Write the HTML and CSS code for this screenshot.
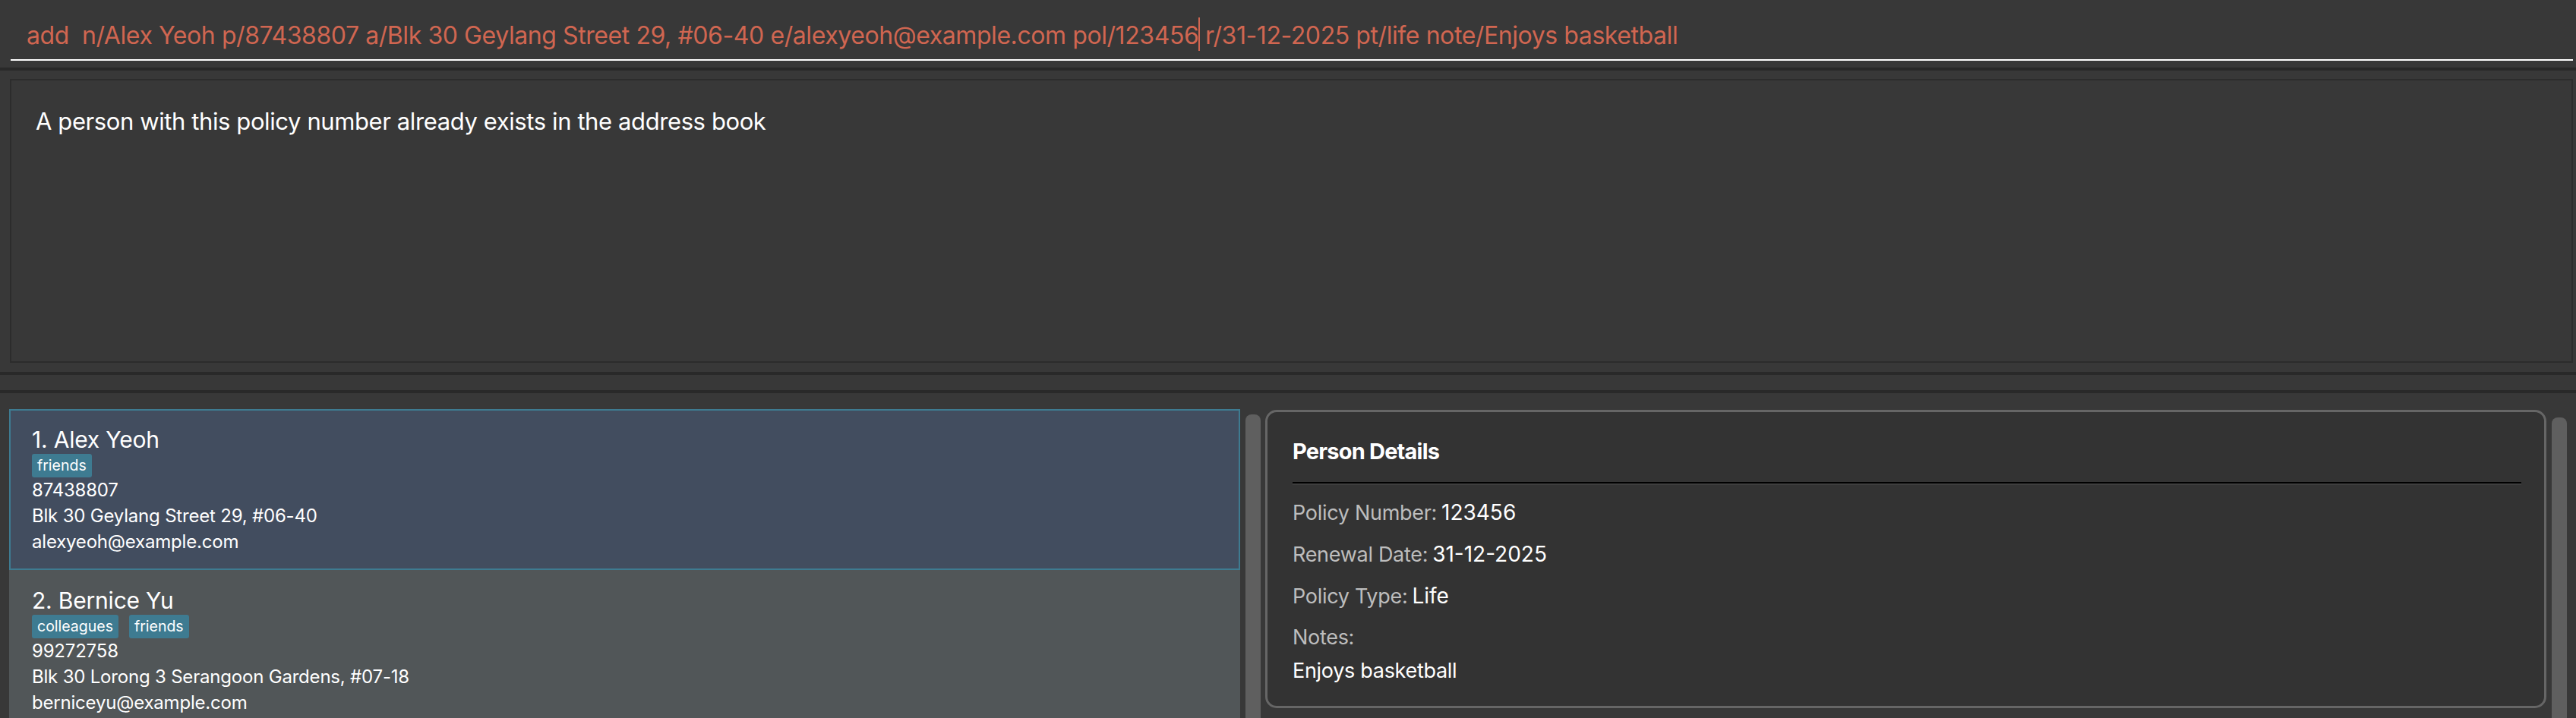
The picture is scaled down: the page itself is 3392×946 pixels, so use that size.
FILE: index.html
```html
<!DOCTYPE html>
<html lang="en">
<head>
<meta charset="utf-8">
<title>Address Book</title>
<link rel="stylesheet" href="styles.css">
</head>
<body>
<div class="app">
  <div class="command-box">
    <div class="command-field"><span class="error-text">add&nbsp; n/Alex Yeoh p/87438807 a/Blk 30 Geylang Street 29, #06-40 e/alexyeoh@example.com pol/123456<span class="caret"></span> r/31-12-2025 pt/life note/Enjoys basketball</span></div>
  </div>
  <div class="divider"></div>
  <div class="result-pane">
    <div class="result-box">A person with this policy number already exists in the address book</div>
  </div>
  <div class="divider"></div>
  <div class="status-pane"></div>
  <div class="divider"></div>
  <div class="main">
    <div class="person-list">
      <div class="card card-selected">
        <div class="card-name">1. Alex Yeoh</div>
        <div class="tags"><span class="tag">friends</span></div>
        <div class="card-line">87438807</div>
        <div class="card-line">Blk 30 Geylang Street 29, #06-40</div>
        <div class="card-line">alexyeoh@example.com</div>
      </div>
      <div class="card card-odd">
        <div class="card-name">2. Bernice Yu</div>
        <div class="tags"><span class="tag">colleagues</span><span class="tag">friends</span></div>
        <div class="card-line">99272758</div>
        <div class="card-line">Blk 30 Lorong 3 Serangoon Gardens, #07-18</div>
        <div class="card-line">berniceyu@example.com</div>
      </div>
    </div>
    <div class="scrollbar scrollbar-list"></div>
    <div class="details">
      <div class="details-title">Person Details</div>
      <div class="separator"></div>
      <div class="detail-row"><span class="detail-label">Policy Number:</span><span class="detail-value">123456</span></div>
      <div class="detail-row"><span class="detail-label">Renewal Date:</span><span class="detail-value">31-12-2025</span></div>
      <div class="detail-row"><span class="detail-label">Policy Type:</span><span class="detail-value">Life</span></div>
      <div class="detail-row detail-notes"><span class="detail-label">Notes:</span></div>
      <div class="detail-note-value">Enjoys basketball</div>
    </div>
    <div class="scrollbar scrollbar-details"></div>
  </div>
</div>
</body>
</html>
```
FILE: styles.css
```css
html, body {
  margin: 0;
  padding: 0;
  background: #383838;
}

body {
  width: 3392px;
  height: 946px;
  overflow: hidden;
  font-family: Inter, "Open Sans", "Liberation Sans", sans-serif;
  color: #ffffff;
}

.app {
  display: flex;
  flex-direction: column;
  height: 946px;
}

/* command box */
.command-box {
  height: 89px;
  padding: 0 4px 0 14px;
  box-sizing: border-box;
}

.command-field {
  height: 80px;
  box-sizing: border-box;
  padding: 23px 0 15px 21px;
  border-bottom: 2px solid #ffffff;
  font-size: 32px;
  line-height: 40px;
  letter-spacing: -0.42px;
  white-space: nowrap;
}

.error-text {
  color: #d06651;
}

.caret {
  display: inline-block;
  width: 2px;
  height: 44px;
  margin-right: -2px;
  background: #d06651;
  vertical-align: -9px;
}

.divider {
  height: 4px;
  background: #292929;
  flex-shrink: 0;
}

/* result display */
.result-pane {
  height: 397px;
  box-sizing: border-box;
  padding: 11px 4px 12px 13px;
}

.result-box {
  height: 100%;
  box-sizing: border-box;
  border: 2px solid #2c2c2c;
  padding: 35px 32px 0 32px;
  font-size: 31px;
  line-height: 38px;
  letter-spacing: -0.4px;
  color: #ffffff;
}

.status-pane {
  height: 20px;
}

/* main area */
.main {
  flex: 1;
  display: flex;
  align-items: flex-start;
  padding: 21px 12px 0 12px;
  overflow: hidden;
}

.person-list {
  width: 1621px;
  flex-shrink: 0;
  display: flex;
  flex-direction: column;
}

.card {
  border: 2px solid transparent;
  padding: 20px 30px 18px 28px;
}

.card-selected {
  background: #424d5f;
  border-color: #3e7b91;
}

.card-odd {
  background: #515658;
  border-color: #515658;
}

.card-name {
  font-size: 30px;
  line-height: 36px;
  letter-spacing: -0.2px;
  color: #ffffff;
}

.tags {
  display: flex;
  gap: 14px;
  margin-top: 1px;
}

.tag {
  background: #3e7b91;
  color: #ffffff;
  font-size: 19.5px;
  line-height: 31px;
  padding: 0 7px;
  border-radius: 3px;
}

.card-line {
  font-size: 24px;
  line-height: 34px;
  letter-spacing: -0.2px;
  color: #ffffff;
}

.scrollbar {
  width: 20px;
  flex-shrink: 0;
  background: #5f5f5f;
  border-radius: 8px;
  height: 500px;
}

.scrollbar-list {
  margin-left: 7px;
  margin-top: 7px;
}

.scrollbar-details {
  margin-left: 7px;
  margin-top: 11px;
}

/* details panel */
.details {
  width: 1687px;
  height: 393px;
  flex-shrink: 0;
  box-sizing: border-box;
  margin-left: 6px;
  margin-top: 1px;
  background: #333333;
  border: 3px solid #666666;
  border-radius: 15px;
  padding: 33px 30px 0 33px;
}

.details-title {
  font-size: 29px;
  line-height: 38px;
  font-weight: 700;
  letter-spacing: -0.8px;
  color: #ffffff;
}

.separator {
  margin-top: 21px;
  height: 2px;
  background: #000000;
  border-bottom: 2px solid #3e3e3e;
}

.detail-row {
  margin-top: 18px;
  font-size: 27px;
  line-height: 36px;
  letter-spacing: -0.3px;
  display: flex;
  align-items: baseline;
  gap: 6px;
}

.detail-row:first-of-type {
  margin-top: 19px;
}

.detail-label {
  color: #bdbdbd;
}

.detail-value {
  color: #ffffff;
  font-size: 28px;
  letter-spacing: 0;
}

.detail-note-value {
  margin-top: 8px;
  font-size: 27px;
  line-height: 36px;
  letter-spacing: -0.3px;
  color: #ffffff;
}
```
